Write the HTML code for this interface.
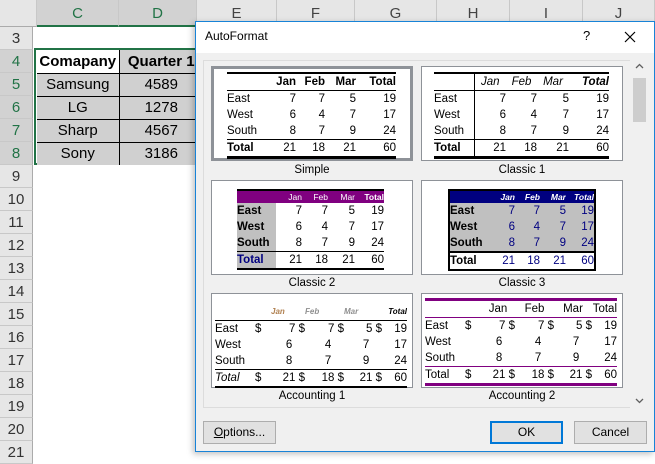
<!DOCTYPE html>
<html><head><meta charset="utf-8"><style>
*{margin:0;padding:0;box-sizing:border-box}
body{width:655px;height:452px;overflow:hidden;background:#fff;font-family:"Liberation Sans",sans-serif;position:relative}
.a{position:absolute}
.ch{position:absolute;top:0;height:27px;background:#e6e6e6;border-right:1px solid #c8c8c8;border-bottom:1px solid #ababab;text-align:center;line-height:27px;font-size:15px;color:#444}
.rh{position:absolute;left:0;width:33px;height:23px;background:#e6e6e6;border-bottom:1px solid #c8c8c8;border-right:1px solid #ababab;text-align:center;line-height:23px;font-size:15px;color:#333}
table{border-collapse:collapse;table-layout:fixed;position:absolute}
td{padding:0;white-space:nowrap;overflow:hidden}
.tile{position:absolute;background:#fff;border:1px solid #8e9298;width:202px;height:95px}
.lbl{position:absolute;width:202px;text-align:center;font-size:11.5px;color:#000}
.p td{font-size:11.5px;height:16px;line-height:16px;text-align:right}
.p td:first-child{text-align:left}
.btn{position:absolute;height:23px;background:#e1e1e1;border:1px solid #adadad;font-size:12px;text-align:center;line-height:21px}
</style></head><body>
<!-- column headers -->
<div class="ch" style="left:0;width:37px;background:#e6e6e6"></div>
<div class="ch" style="left:37px;width:82px;background:#d2d2d2;color:#217346;border-bottom:2px solid #217346">C</div>
<div class="ch" style="left:119px;width:78px;background:#d2d2d2;color:#217346;border-bottom:2px solid #217346">D</div>
<div class="ch" style="left:197px;width:80px">E</div>
<div class="ch" style="left:277px;width:78px">F</div>
<div class="ch" style="left:355px;width:82px">G</div>
<div class="ch" style="left:437px;width:73px">H</div>
<div class="ch" style="left:510px;width:73px">I</div>
<div class="ch" style="left:583px;width:72px">J</div>
<!-- row headers -->
<div class="rh" style="top:27px">3</div>
<div class="rh" style="top:50px;background:#d2d2d2;color:#217346">4</div>
<div class="rh" style="top:73px;background:#d2d2d2;color:#217346">5</div>
<div class="rh" style="top:96px;background:#d2d2d2;color:#217346">6</div>
<div class="rh" style="top:119px;background:#d2d2d2;color:#217346">7</div>
<div class="rh" style="top:142px;background:#d2d2d2;color:#217346">8</div>
<div class="rh" style="top:165px">9</div>
<div class="rh" style="top:188px">10</div>
<div class="rh" style="top:211px">11</div>
<div class="rh" style="top:234px">12</div>
<div class="rh" style="top:257px">13</div>
<div class="rh" style="top:280px">14</div>
<div class="rh" style="top:303px">15</div>
<div class="rh" style="top:326px">16</div>
<div class="rh" style="top:349px">17</div>
<div class="rh" style="top:372px">18</div>
<div class="rh" style="top:395px">19</div>
<div class="rh" style="top:418px">20</div>
<div class="rh" style="top:441px">21</div>
<!-- sheet table -->
<div class="a" style="left:34px;top:48px;width:170px;height:117px;border:2px solid #217346"></div>
<table style="left:37px;top:50px;width:166px;font-size:15px">
<tr style="height:23px;background:#fff;font-weight:bold"><td style="width:82px;border:1px solid #000;border-top:none;border-left:none;text-align:center">Comapany</td><td style="width:84px;border-bottom:1px solid #000;text-align:center;background:#d0d0d0">Quarter 1</td></tr>
<tr style="height:23px;background:#d0d0d0"><td style="border-right:1px solid #000;border-bottom:1px solid #000;text-align:center">Samsung</td><td style="border-bottom:1px solid #000;text-align:center">4589</td></tr>
<tr style="height:23px;background:#d0d0d0"><td style="border-right:1px solid #000;border-bottom:1px solid #000;text-align:center">LG</td><td style="border-bottom:1px solid #000;text-align:center">1278</td></tr>
<tr style="height:23px;background:#d0d0d0"><td style="border-right:1px solid #000;border-bottom:1px solid #000;text-align:center">Sharp</td><td style="border-bottom:1px solid #000;text-align:center">4567</td></tr>
<tr style="height:23px;background:#d0d0d0"><td style="border-right:1px solid #000;text-align:center">Sony</td><td style="text-align:center">3186</td></tr>
</table>
<!-- dialog -->
<div class="a" style="left:195px;top:21px;width:460px;height:431px;background:#f0f0f0;border:1px solid #1883d7;box-shadow:-2px 2px 6px rgba(0,0,0,.25)">
 <div class="a" style="left:0;top:0;width:458px;height:31px;background:#fff"></div>
 <div class="a" style="left:9px;top:7px;font-size:12px">AutoFormat</div>
 <div class="a" style="left:387px;top:6px;font-size:13px">?</div>
 <svg class="a" style="left:428px;top:9px" width="12" height="12"><path d="M1 1L11 11M11 1L1 11" stroke="#000" stroke-width="1.2"/></svg>
 <div class="a" style="left:7px;top:38px;width:428px;height:348px;border:1px solid #dcdcdc;background:#f0f0f0"></div>
 <div class="a" style="left:434px;top:38px;width:17px;height:348px;background:#f0f0f0"></div>
 <div class="a" style="left:437px;top:56px;width:13px;height:44px;background:#cdcdcd"></div>
 <svg class="a" style="left:439px;top:41px" width="9" height="6"><path d="M1 5L4.5 1.5L8 5" stroke="#606060" fill="none" stroke-width="1.3"/></svg>
 <svg class="a" style="left:439px;top:376px" width="9" height="6"><path d="M1 1L4.5 4.5L8 1" stroke="#606060" fill="none" stroke-width="1.3"/></svg>
 <div class="btn" style="left:7px;top:399px;width:73px"><u>O</u>ptions...</div>
 <div class="btn" style="left:294px;top:399px;width:73px;border:2px solid #0078d7;line-height:19px">OK</div>
 <div class="btn" style="left:378px;top:399px;width:73px">Cancel</div>
</div>
<!-- tiles -->
<div class="tile" style="left:211px;top:66px;border:3px solid #8e9298"></div>
<div class="tile" style="left:421px;top:66px"></div>
<div class="tile" style="left:211px;top:180px"></div>
<div class="tile" style="left:421px;top:180px"></div>
<div class="tile" style="left:211px;top:293px"></div>
<div class="tile" style="left:421px;top:293px"></div>
<div class="lbl" style="left:211px;top:164px">Simple</div>
<div class="lbl" style="left:421px;top:164px">Classic 1</div>
<div class="lbl" style="left:211px;top:277px">Classic 2</div>
<div class="lbl" style="left:421px;top:277px">Classic 3</div>
<div class="lbl" style="left:211px;top:390px">Accounting 1</div>
<div class="lbl" style="left:421px;top:390px">Accounting 2</div>

<!-- Simple -->
<table class="p" style="left:227px;top:72px;width:169px;border-top:2px solid #000;border-bottom:3px solid #000">
<col style="width:41px"><col style="width:28px"><col style="width:29px"><col style="width:31px"><col style="width:40px">
<tr style="font-weight:bold;border-bottom:1px solid #000"><td></td><td>Jan</td><td>Feb</td><td>Mar</td><td>Total</td></tr>
<tr><td>East</td><td>7</td><td>7</td><td>5</td><td>19</td></tr>
<tr><td>West</td><td>6</td><td>4</td><td>7</td><td>17</td></tr>
<tr><td>South</td><td>8</td><td>7</td><td>9</td><td>24</td></tr>
<tr style="border-top:1px solid #000"><td style="font-weight:bold">Total</td><td>21</td><td>18</td><td>21</td><td>60</td></tr>
</table>
<!-- Classic 1 -->
<table class="p" style="left:434px;top:72px;width:175px;border-top:2px solid #000;border-bottom:3px solid #000">
<col style="width:40px"><col style="width:32px"><col style="width:31px"><col style="width:32px"><col style="width:40px">
<tr style="font-style:italic;border-bottom:1px solid #000"><td style="border-right:1px solid #000"></td><td style="text-align:center">Jan</td><td style="text-align:center">Feb</td><td style="text-align:center">Mar</td><td style="font-weight:bold">Total</td></tr>
<tr><td style="border-right:1px solid #000">East</td><td>7</td><td>7</td><td>5</td><td>19</td></tr>
<tr><td style="border-right:1px solid #000">West</td><td>6</td><td>4</td><td>7</td><td>17</td></tr>
<tr><td style="border-right:1px solid #000">South</td><td>8</td><td>7</td><td>9</td><td>24</td></tr>
<tr style="border-top:1px solid #000"><td style="font-weight:bold;border-right:1px solid #000">Total</td><td>21</td><td>18</td><td>21</td><td>60</td></tr>
</table>
<!-- Classic 2 -->
<table class="p" style="left:237px;top:189px;width:147px;border-top:2px solid #000;border-bottom:2px solid #000">
<col style="width:39px"><col style="width:26px"><col style="width:26px"><col style="width:27px"><col style="width:29px">
<tr style="background:#800080;color:#fff"><td style="height:12px;line-height:12px;font-size:8.5px"></td><td style="height:12px;line-height:12px;font-size:8.5px">Jan</td><td style="height:12px;line-height:12px;font-size:8.5px">Feb</td><td style="height:12px;line-height:12px;font-size:8.5px">Mar</td><td style="height:12px;line-height:12px;font-size:8.5px;font-weight:bold">Total</td></tr>
<tr><td style="background:#c0c0c0;font-weight:bold">East</td><td>7</td><td>7</td><td>5</td><td>19</td></tr>
<tr><td style="background:#c0c0c0;font-weight:bold">West</td><td>6</td><td>4</td><td>7</td><td>17</td></tr>
<tr><td style="background:#c0c0c0;font-weight:bold">South</td><td>8</td><td>7</td><td>9</td><td>24</td></tr>
<tr style="border-top:1px solid #000"><td style="background:#c0c0c0;font-weight:bold;color:#000080">Total</td><td>21</td><td>18</td><td>21</td><td>60</td></tr>
</table>
<!-- Classic 3 -->
<table class="p" style="left:448px;top:189px;width:146px;border:2px solid #000">
<col style="width:40px"><col style="width:26px"><col style="width:25px"><col style="width:26px"><col style="width:29px">
<tr style="background:#000080;color:#fff;font-style:italic;font-weight:bold"><td style="height:12px;line-height:12px;font-size:8.5px"></td><td style="height:12px;line-height:12px;font-size:8.5px">Jan</td><td style="height:12px;line-height:12px;font-size:8.5px">Feb</td><td style="height:12px;line-height:12px;font-size:8.5px">Mar</td><td style="height:12px;line-height:12px;font-size:8.5px">Total</td></tr>
<tr style="background:#c0c0c0;color:#000080"><td style="font-weight:bold;color:#000">East</td><td>7</td><td>7</td><td>5</td><td>19</td></tr>
<tr style="background:#c0c0c0;color:#000080"><td style="font-weight:bold;color:#000">West</td><td>6</td><td>4</td><td>7</td><td>17</td></tr>
<tr style="background:#c0c0c0;color:#000080"><td style="font-weight:bold;color:#000">South</td><td>8</td><td>7</td><td>9</td><td>24</td></tr>
<tr style="border-top:2px solid #000;color:#000080"><td style="font-weight:bold;color:#000">Total</td><td>21</td><td>18</td><td>21</td><td>60</td></tr>
</table>
<!-- Accounting 1 -->
<table class="p" style="left:215px;top:304px;width:192px;border-bottom:2px solid #000">
<col style="width:40px"><col style="width:16px"><col style="width:34px"><col style="width:39px"><col style="width:38px"><col style="width:25px">
<tr style="border-bottom:1px solid #000;font-style:italic;font-weight:bold;color:#a08060"><td style="height:13px;line-height:13px;font-size:8px"></td><td style="font-size:8px;height:13px"></td><td style="font-size:8px;height:13px;text-align:left;color:#b08050">Jan</td><td style="font-size:8px;height:13px;text-align:left;color:#909090">Feb</td><td style="font-size:8px;height:13px;color:#909090;text-align:left">Mar</td><td style="font-size:8px;height:13px;color:#000">Total</td></tr>
<tr><td>East</td><td style="text-align:left">$</td><td>7 $</td><td>7 $</td><td>5 $</td><td>19</td></tr>
<tr><td>West</td><td></td><td>6&nbsp;&nbsp;&nbsp;&nbsp;</td><td>4&nbsp;&nbsp;&nbsp;&nbsp;</td><td>7&nbsp;&nbsp;&nbsp;&nbsp;</td><td>17</td></tr>
<tr><td>South</td><td></td><td>8&nbsp;&nbsp;&nbsp;&nbsp;</td><td>7&nbsp;&nbsp;&nbsp;&nbsp;</td><td>9&nbsp;&nbsp;&nbsp;&nbsp;</td><td>24</td></tr>
<tr style="border-top:1px solid #000"><td style="font-style:italic">Total</td><td style="text-align:left">$</td><td>21 $</td><td>18 $</td><td>21 $</td><td>60</td></tr>
</table>
<!-- Accounting 2 -->
<table class="p" style="left:425px;top:298px;width:192px;border-top:3px solid #800080;border-bottom:3px solid #800080">
<col style="width:40px"><col style="width:16px"><col style="width:34px"><col style="width:39px"><col style="width:38px"><col style="width:25px">
<tr style="border-bottom:1px solid #800080"><td></td><td></td><td style="text-align:center">Jan</td><td style="text-align:center">Feb</td><td style="text-align:center">Mar</td><td>Total</td></tr>
<tr><td>East</td><td style="text-align:left">$</td><td>7 $</td><td>7 $</td><td>5 $</td><td>19</td></tr>
<tr><td>West</td><td></td><td>6&nbsp;&nbsp;&nbsp;&nbsp;</td><td>4&nbsp;&nbsp;&nbsp;&nbsp;</td><td>7&nbsp;&nbsp;&nbsp;&nbsp;</td><td>17</td></tr>
<tr><td>South</td><td></td><td>8&nbsp;&nbsp;&nbsp;&nbsp;</td><td>7&nbsp;&nbsp;&nbsp;&nbsp;</td><td>9&nbsp;&nbsp;&nbsp;&nbsp;</td><td>24</td></tr>
<tr style="border-top:1px solid #800080"><td>Total</td><td style="text-align:left">$</td><td>21 $</td><td>18 $</td><td>21 $</td><td>60</td></tr>
</table>
</body></html>
